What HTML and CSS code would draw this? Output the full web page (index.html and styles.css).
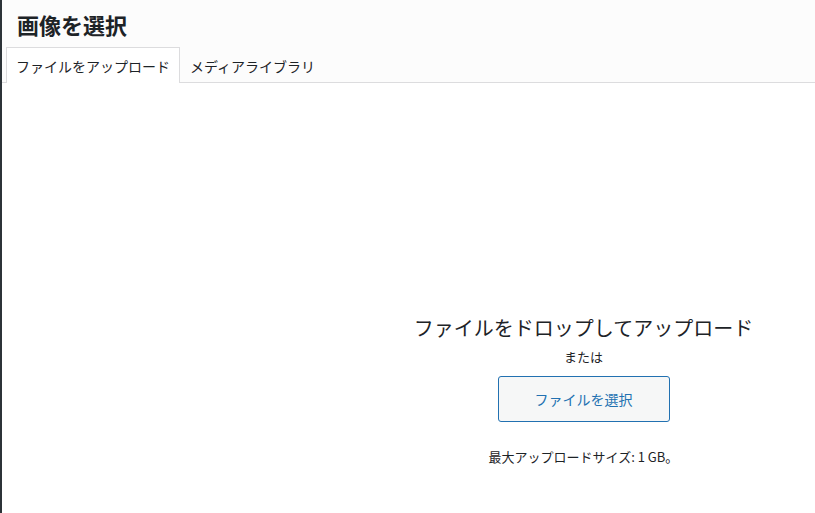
FILE: index.html
```html
<!DOCTYPE html>
<html lang="ja">
<head>
    <meta charset="UTF-8">
    <meta name="viewport" content="width=device-width, initial-scale=1.0">
    <title>画像を選択</title>
    <link rel="stylesheet" href="styles.css">
</head>
<body>
    <div class="frame">
        <div class="frame-head">
            <h1 class="frame-title">画像を選択</h1>
            <div class="tabs">
                <button class="tab active">ファイルをアップロード</button>
                <button class="tab">メディアライブラリ</button>
            </div>
        </div>
        <div class="frame-content">
            <div class="uploader">
                <h2 class="drop-title">ファイルをドロップしてアップロード</h2>
                <p class="or">または</p>
                <button class="select-btn">ファイルを選択</button>
                <p class="max-size">最大アップロードサイズ: 1 GB。</p>
            </div>
        </div>
    </div>
</body>
</html>
```

FILE: styles.css
```css
html, body {
    margin: 0;
    height: 100%;
    overflow: hidden;
}
body {
    font-family: "Noto Sans CJK JP", "Liberation Sans", sans-serif;
    color: #1d2327;
    background: #fff;
    border-left: 2px solid #2c3338;
}
.frame {
    height: 100%;
    display: flex;
    flex-direction: column;
}
.frame-head {
    background: #fcfcfc;
    border-bottom: 1px solid #dcdcde;
}
.frame-title {
    margin: 0;
    padding: 6px 15px 0;
    font-size: 22px;
    line-height: 36px;
    font-weight: 700;
    color: #1d2327;
}
.tabs {
    display: flex;
    padding: 5px 4px 0;
}
.tab {
    font-family: inherit;
    font-size: 14px;
    color: #1d2327;
    background: transparent;
    border: 1px solid transparent;
    border-bottom: 0;
    margin-bottom: -1px;
    padding: 0 9px;
    height: 36px;
    line-height: 34px;
}
.tab.active {
    background: #fff;
    border-color: #dcdcde;
}
.frame-content {
    flex: 1;
    padding-left: 350px;
}
.uploader {
    display: flex;
    flex-direction: column;
    align-items: center;
    padding-top: 230px;
}
.drop-title {
    margin: 0;
    font-size: 20px;
    font-weight: 400;
    line-height: 30px;
    color: #1d2327;
}
.or {
    margin: 4px 0 0;
    font-size: 13px;
    line-height: 20px;
}
.select-btn {
    margin-top: 9px;
    width: 172px;
    height: 46px;
    font-family: inherit;
    font-size: 14px;
    color: #2271b1;
    background: #f6f7f7;
    border: 1px solid #2271b1;
    border-radius: 3px;
}
.max-size {
    margin: 25px 0 0;
    font-size: 13px;
    line-height: 20px;
    color: #1d2327;
}
```
